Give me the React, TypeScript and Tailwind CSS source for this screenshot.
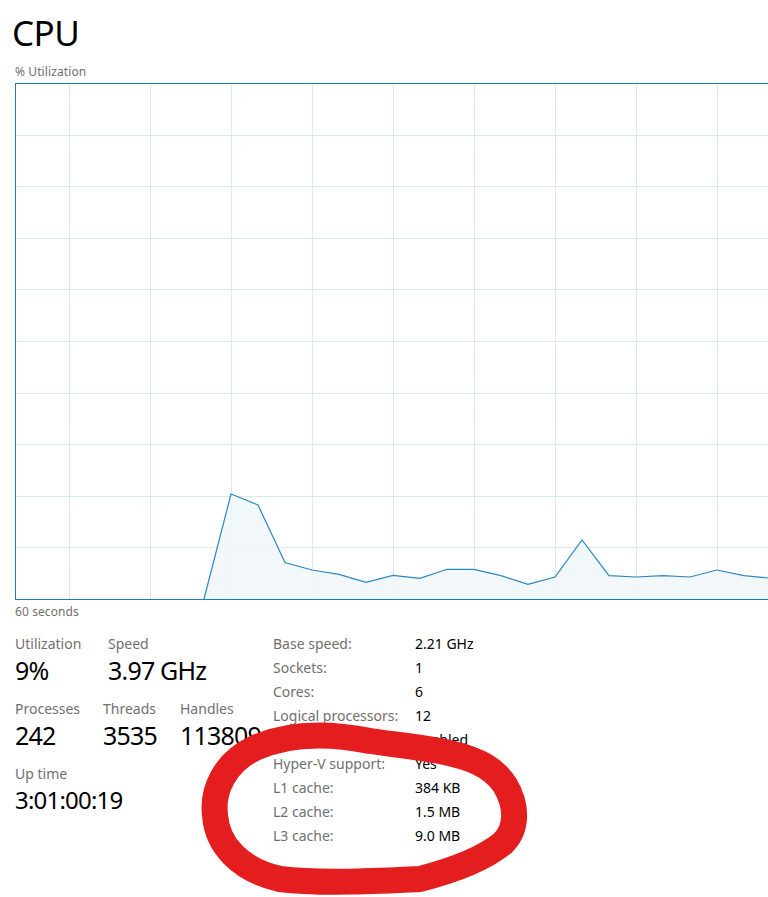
import React from "react";

const pts: [number, number][] = [
  [204, 599], [231, 494], [258, 505], [285, 562.5], [312, 570], [339, 574.3], [366, 582.3],
  [393, 575.3], [420, 578.3], [447, 569.3], [474, 569.3], [501, 575.7], [528, 584.3],
  [555, 577], [582, 540], [609, 575.7], [636, 577], [663, 575.7], [690, 577], [717, 570],
  [744, 575.7], [768, 578],
];

function Graph() {
  const w = 753;
  const h = 515;
  const local = pts.map(([x, y]) => [x - 16, y - 84] as [number, number]);
  const line = local.map(([x, y]) => `${x},${y}`).join(" ");
  const area = `${local[0][0]},${h} ${line} ${w},${h}`;
  const hs = [1, 2, 3, 4, 5, 6, 7, 8, 9].map((k) => Math.round(k * 51.6) - 0.5);
  const vs = [0, 1, 2, 3, 4, 5, 6, 7, 8].map((k) => 53 + k * 81 + 0.5);
  return (
    <div className="ml-[15px] h-[517px] border-l border-t border-b border-[#1b7dbc] overflow-hidden">
      <svg width={w} height={h} className="block">
        {hs.map((y) => (
          <line key={"h" + y} x1={0} x2={w} y1={y} y2={y} stroke="#d9eaf4" strokeWidth={1} />
        ))}
        {vs.map((x) => (
          <line key={"v" + x} x1={x} x2={x} y1={0} y2={h} stroke="#d9eaf4" strokeWidth={1} />
        ))}
        <polygon points={area} fill="#f1f6fa" fillOpacity={0.9} />
        <polyline points={line} fill="none" stroke="#2a86c4" strokeWidth={1.2} />
      </svg>
    </div>
  );
}

function Stat({
  label,
  value,
  w,
  size = "text-[25px] tracking-[-0.8px]",
}: {
  label: string;
  value: string;
  w?: string;
  size?: string;
}) {
  return (
    <div className={w}>
      <div className="text-[14px] leading-[20px] text-[#707070] whitespace-nowrap">{label}</div>
      <div className={`${size} leading-[32px] text-black whitespace-nowrap`}>{value}</div>
    </div>
  );
}

const rows: [string, string][] = [
  ["Base speed:", "2.21 GHz"],
  ["Sockets:", "1"],
  ["Cores:", "6"],
  ["Logical processors:", "12"],
  ["Virtualization:", "Enabled"],
  ["Hyper-V support:", "Yes"],
  ["L1 cache:", "384 KB"],
  ["L2 cache:", "1.5 MB"],
  ["L3 cache:", "9.0 MB"],
];

export default function App() {
  return (
    <div
      className="relative w-[768px] h-[897px] overflow-hidden bg-white"
      style={{ fontFamily: '"Noto Sans", "Open Sans", sans-serif' }}
    >
      <div className="pt-[15px] pl-[12px] text-[35px] leading-[35px] tracking-[-0.5px] text-black">CPU</div>
      <div className="mt-[14px] pl-[15px] text-[12px] leading-[16px] text-[#707070] tracking-[0.1px]">
        % Utilization
      </div>
      <div className="mt-[3px]">
        <Graph />
      </div>
      <div className="mt-[4px] pl-[15px] text-[12px] leading-[16px] text-[#707070] tracking-[0.1px]">60 seconds</div>
      <div className="mt-[14px] flex pl-[15px]">
        <div className="w-[258px] flex flex-col gap-[13px]">
          <div className="flex">
            <Stat label="Utilization" value="9%" w="w-[93px]" />
            <Stat label="Speed" value="3.97 GHz" />
          </div>
          <div className="flex">
            <Stat label="Processes" value="242" w="w-[88px]" />
            <Stat label="Threads" value="3535" w="w-[77px]" />
            <Stat label="Handles" value="113809" />
          </div>
          <div className="flex">
            <Stat label="Up time" value="3:01:00:19" size="text-[24px] tracking-[-0.8px]" />
          </div>
        </div>
        <div className="-mt-[2px] text-[14px] leading-[24px]">
          {rows.map(([k, v]) => (
            <div key={k} className="flex">
              <div className="w-[142px] text-[#707070] whitespace-nowrap">{k}</div>
              <div className="text-black whitespace-nowrap">{v}</div>
            </div>
          ))}
        </div>
      </div>
      <svg className="absolute left-0 top-0 pointer-events-none" width={768} height={897}>
        <path
          d="M370 741 C 330 733, 290 732, 255 748 C 225 762, 212 790, 215 815 C 217 845, 240 870, 280 879 C 320 884, 380 881, 420 879 C 455 870, 485 858, 503 843 C 518 828, 517 805, 505 785 C 492 765, 470 757, 440 751 C 410 746, 390 744, 370 741 Z"
          fill="none"
          stroke="#e41e1e"
          strokeWidth={26}
          strokeLinejoin="round"
        />
      </svg>
    </div>
  );
}
